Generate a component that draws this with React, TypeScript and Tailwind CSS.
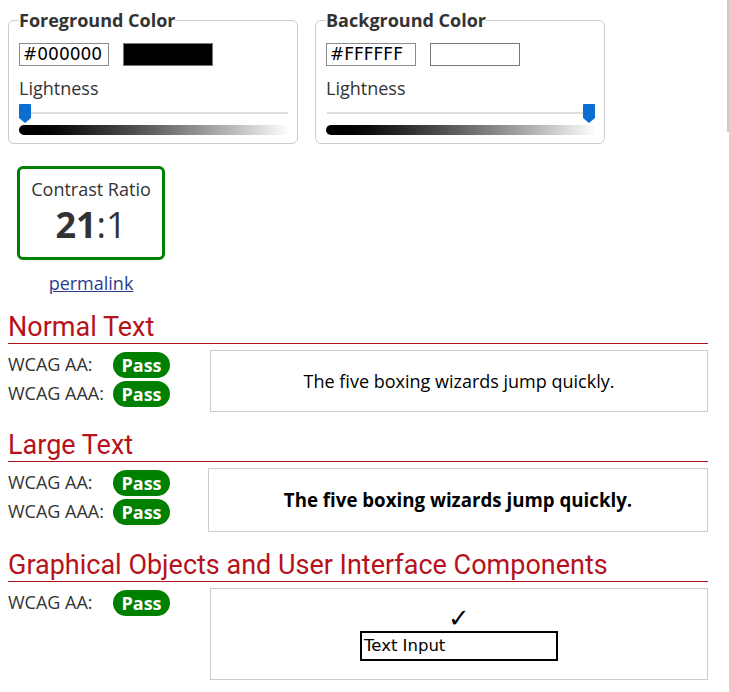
import React from "react";

const body = { fontFamily: '"Open Sans", "Liberation Sans", sans-serif' };
const head = { fontFamily: 'Roboto, "Liberation Sans", sans-serif' };
const mono = { fontFamily: '"DejaVu Sans", Verdana, sans-serif' };

function Thumb() {
  return (
    <svg width="12" height="19" viewBox="0 0 12 19" className="block">
      <path d="M1 0 H11 A1 1 0 0 1 12 1 V14 L6 19 L0 14 V1 A1 1 0 0 1 1 0 Z" fill="#0a6fd1" />
    </svg>
  );
}

function ColorBox({ title, value, swatch, right }: { title: string; value: string; swatch: string; right?: boolean }) {
  return (
    <fieldset className="w-[290px] h-[136px] border border-[#cccccc] rounded-[6px] pl-[10px] pr-[8px] pb-[10px]">
      <legend className="text-[18px] font-bold text-[#333333] leading-[24px] px-0">{title}</legend>
      <div className="flex items-center gap-[14px] mt-[11px]">
        <div className="w-[90px] h-[23px] border border-[#8a8a8a] text-[17px] leading-[21px] pl-[3px] text-black" style={mono}>
          {value}
        </div>
        <div className="w-[90px] h-[23px] border border-[#777777]" style={{ backgroundColor: swatch }} />
      </div>
      <div className="text-[18px] text-[#333333] leading-[24px] mt-[10px]">Lightness</div>
      <div className={`relative h-[19px] mt-[4px] flex items-center ${right ? "justify-end pr-[1px]" : ""}`}>
        <div className="absolute left-[1px] right-[1px] top-[8px] h-[2px] bg-[#dddddd]" />
        <div className="relative">
          <Thumb />
        </div>
      </div>
      <div className="h-[10px] mt-[2px] rounded-l-[5px] bg-gradient-to-r from-black to-white" />
    </fieldset>
  );
}

function Pass() {
  return (
    <span className="inline-flex items-center justify-center w-[57px] h-[26px] rounded-full bg-[#008000] text-white font-bold text-[18px] leading-none">
      Pass
    </span>
  );
}

function Row({ label, pill }: { label: string; pill: boolean }) {
  return (
    <div className="flex items-center h-[29px]">
      <span className="w-[105px] text-[18px] text-[#333333]">{label}</span>
      {pill && <Pass />}
    </div>
  );
}

function Heading({ children }: { children: React.ReactNode }) {
  return (
    <div className="border-b border-[#b0141f] text-[#b5121b] text-[27px] leading-[30px] pb-[1px]" style={head}>
      {children}
    </div>
  );
}

export default function App() {
  return (
    <div className="bg-white w-[729px] h-[692px] relative overflow-hidden text-[#333333]" style={body}>
      <div className="absolute right-0 top-0 w-[2px] h-[132px] bg-[#cccccc]" />
      <div className="pl-[8px] pt-[8px] flex gap-[17px]">
        <ColorBox title="Foreground Color" value="#000000" swatch="#000000" />
        <ColorBox title="Background Color" value="#FFFFFF" swatch="#FFFFFF" right />
      </div>

      <div className="ml-[17px] mt-[22px] w-[148px] flex flex-col items-center">
        <div className="w-[148px] h-[94px] border-[3px] border-[#008000] rounded-[6px] flex flex-col items-center pt-[8px]">
          <div className="text-[18px] leading-[24px] text-[#333333]">Contrast Ratio</div>
          <div className="text-[36px] leading-[44px] text-[#333333] mt-[2px]">
            <span className="font-bold">21</span>:1
          </div>
        </div>
        <a className="mt-[11px] text-[18px] leading-[24px] text-[#2a3d91] underline" href="#">permalink</a>
      </div>

      <div className="ml-[8px] w-[700px] mt-[17px]">
        <Heading>Normal Text</Heading>
        <div className="flex mt-[6px]">
          <div className="w-[202px] flex flex-col">
            <Row label="WCAG AA:" pill />
            <Row label="WCAG AAA:" pill />
          </div>
          <div className="flex-1 h-[62px] border border-[#cccccc] flex items-center justify-center text-[18px] text-black">
            The five boxing wizards jump quickly.
          </div>
        </div>

        <div className="mt-[18px]">
          <Heading>Large Text</Heading>
        </div>
        <div className="flex mt-[6px]">
          <div className="w-[200px] flex flex-col">
            <Row label="WCAG AA:" pill />
            <Row label="WCAG AAA:" pill />
          </div>
          <div className="flex-1 h-[64px] border border-[#cccccc] flex items-center justify-center text-[18.7px] font-bold text-black">
            The five boxing wizards jump quickly.
          </div>
        </div>

        <div className="mt-[18px]">
          <Heading>Graphical Objects and User Interface Components</Heading>
        </div>
        <div className="flex mt-[6px]">
          <div className="w-[202px] flex flex-col">
            <Row label="WCAG AA:" pill />
          </div>
          <div className="flex-1 h-[92px] border border-[#cccccc] flex flex-col items-center pt-[16px]">
            <div className="text-[26px] leading-[26px] text-black" style={mono}>✓</div>
            <div
              className="w-[198px] h-[30px] border-2 border-black text-[16.5px] leading-[26px] pl-[2px] text-black"
              style={mono}
            >
              Text Input
            </div>
          </div>
        </div>
      </div>
    </div>
  );
}
